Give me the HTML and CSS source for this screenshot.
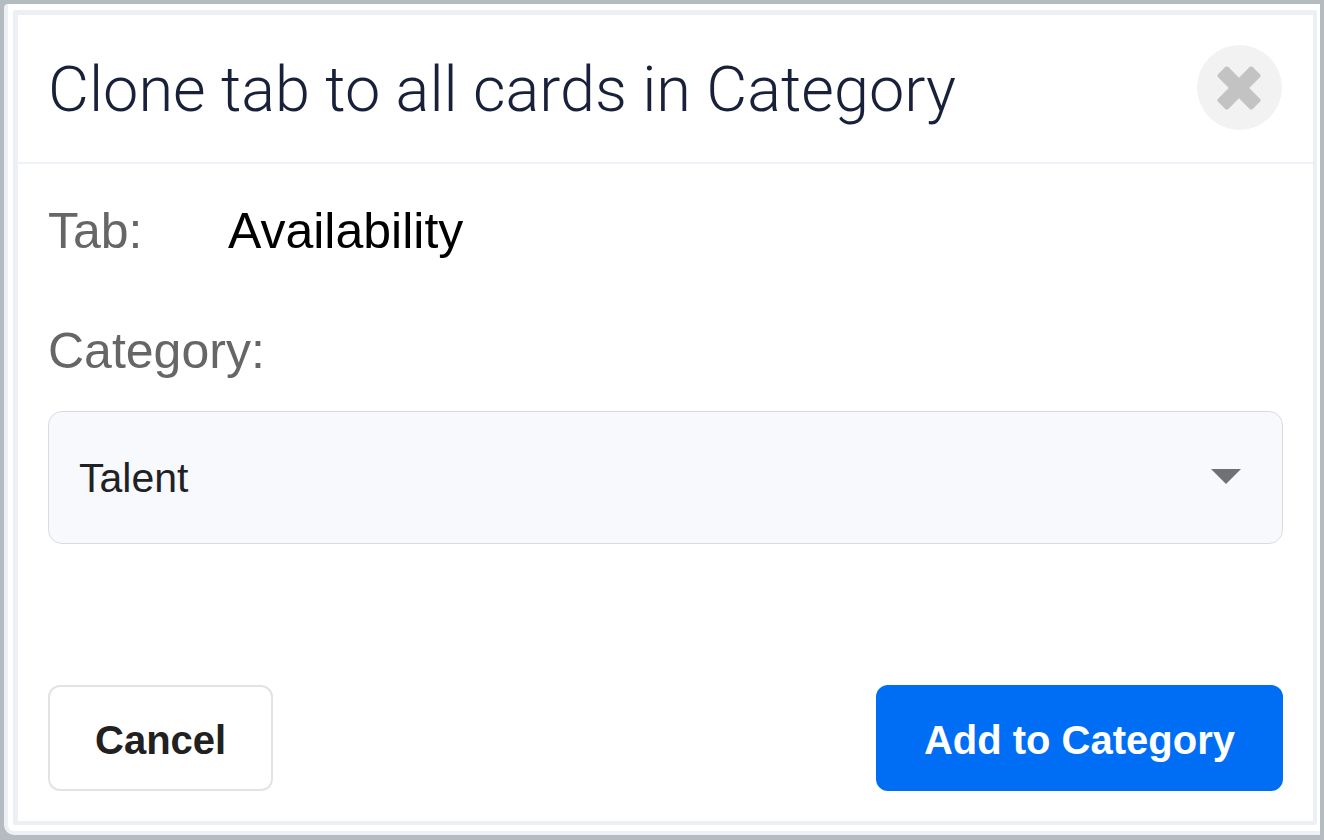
FILE: index.html
```html
<!DOCTYPE html>
<html lang="en">
<head>
<meta charset="utf-8">
<title>Clone tab to all cards in Category</title>
<link rel="stylesheet" href="styles.css">
</head>
<body>
<div class="frame">
  <form class="dialog" role="dialog" aria-labelledby="dialog-title">
    <header class="dialog-header">
      <h1 class="dialog-title" id="dialog-title">Clone tab to all cards in Category</h1>
      <button class="close" type="button" aria-label="Close">
        <svg class="close-icon" viewBox="0 0 45 45" aria-hidden="true">
          <g transform="rotate(45 22 23)">
            <rect x="-2.500" y="15.750" width="49" height="14.500" rx="2.500"/>
            <rect x="14.750" y="-1.500" width="14.500" height="49" rx="2.500"/>
          </g>
        </svg>
      </button>
    </header>
    <div class="dialog-body">
      <div class="tab-row">
        <span class="label tab-label">Tab:</span>
        <span class="tab-value">Availability</span>
      </div>
      <div class="field">
        <label class="label" for="category">Category:</label>
        <div class="select-wrap">
          <select class="select" id="category">
            <option>Talent</option>
          </select>
          <svg class="caret" viewBox="0 0 30 15" aria-hidden="true"><path d="M0 0H30L15 15Z"/></svg>
        </div>
      </div>
    </div>
    <footer class="dialog-footer">
      <button class="button button-secondary" type="button">Cancel</button>
      <button class="button button-primary" type="submit">Add to Category</button>
    </footer>
  </form>
</div>
</body>
</html>
```
FILE: styles.css
```css
* {
  box-sizing: border-box;
}

body {
  margin: 0;
  min-height: 100vh;
  display: flex;
  padding: 4px 4px 5px;
  background: #b4bcc1;
  font-family: "Liberation Sans", Arial, sans-serif;
}

.frame {
  flex: 1;
  display: flex;
  padding: 6px 3px 6px 5px;
  border-left: 4px solid #edf1f6;
  border-bottom: 4px solid #edf1f6;
  border-radius: 4px 0 0 10px;
  background: #fff;
}

.dialog {
  flex: 1;
  display: flex;
  flex-direction: column;
  border: 5px solid #ecf0f5;
  border-right-width: 4px;
  border-bottom-width: 4px;
  border-radius: 2px;
  background: #fff;
}

.dialog-header {
  display: flex;
  align-items: center;
  justify-content: space-between;
  padding: 30px 31px 32px 30px;
  border-bottom: 2px solid #eff2f7;
}

.dialog-title {
  margin: 0;
  padding-top: 5px;
  color: #19213a;
  font-family: Roboto, sans-serif;
  font-size: 63px;
  font-weight: 300;
  line-height: 80px;
}

.close {
  display: flex;
  flex: none;
  align-items: center;
  justify-content: center;
  width: 85px;
  height: 85px;
  padding: 0;
  border: 0;
  border-radius: 50%;
  background: #f2f2f2;
}

.close-icon {
  width: 45px;
  height: 45px;
  fill: #c3c3c3;
}

.dialog-body {
  display: flex;
  flex-direction: column;
  gap: 60px;
  padding: 37px 30px;
}

.label,
.tab-value {
  font-size: 50px;
  line-height: 60px;
}

.label {
  color: #666;
}

.tab-row {
  display: flex;
}

.tab-label {
  width: 180px;
}

.tab-value {
  color: #000;
}

.field {
  display: flex;
  flex-direction: column;
  gap: 30px;
}

.select-wrap {
  position: relative;
}

.select {
  display: block;
  width: 100%;
  height: 133px;
  padding: 0 80px 0 30px;
  border: 1px solid #d9dbdf;
  border-radius: 14px;
  background: #f8f9fd;
  color: #202124;
  font-family: inherit;
  font-size: 41px;
  appearance: none;
}

.caret {
  position: absolute;
  top: 58px;
  right: 42px;
  width: 30px;
  height: 15px;
  fill: #707174;
  pointer-events: none;
}

.dialog-footer {
  display: flex;
  justify-content: space-between;
  margin-top: auto;
  padding: 0 30px 30px;
}

.button {
  height: 106px;
  padding: 4px 45px 0;
  border: 2px solid #e3e3e3;
  border-radius: 12px;
  background: #fff;
  color: #212121;
  font-family: inherit;
  font-size: 40px;
  font-weight: 700;
}

.button-primary {
  padding: 4px 46px 0;
  border-color: #006ef4;
  background: #006ef4;
  color: #fff;
}
```
